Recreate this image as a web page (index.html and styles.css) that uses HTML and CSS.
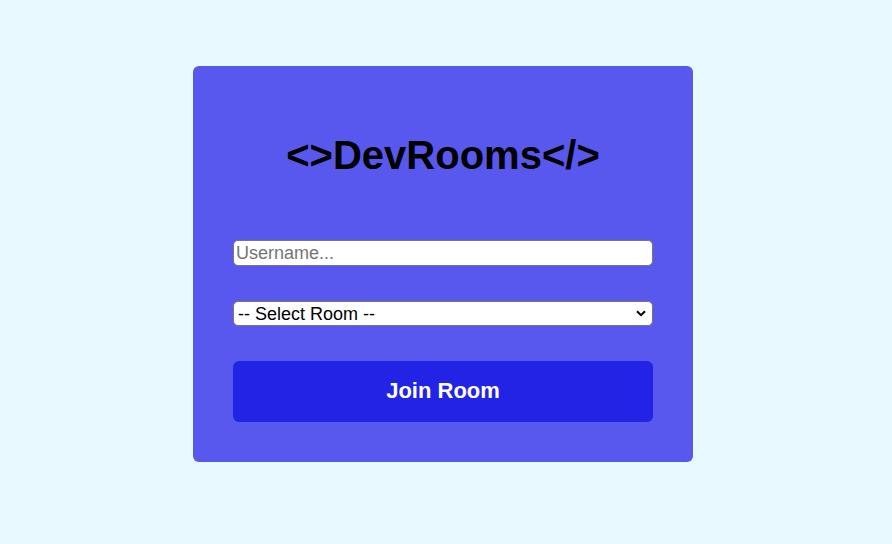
FILE: index.html
```html
<!DOCTYPE html>
<html>
<head>
<meta charset="utf-8">
<link rel="stylesheet" href="styles.css">
</head>
<body>
<div class="page">
  <div class="card">
    <h1 class="title">&lt;&gt;DevRooms&lt;/&gt;</h1>
    <form class="form">
      <input class="field" type="text" placeholder="Username...">
      <div class="select-wrap">
        <select class="field select">
          <option>-- Select Room --</option>
        </select>
        <svg class="chevron" width="10" height="7" viewBox="0 0 10 7"><path d="M1 1.2 L5 5.2 L9 1.2" fill="none" stroke="#000" stroke-width="2"/></svg>
      </div>
      <button class="join" type="button">Join Room</button>
    </form>
  </div>
</div>
</body>
</html>
```
FILE: styles.css
```css
html, body {
  margin: 0;
  padding: 0;
  background: #e8faff;
  font-family: "Liberation Sans", Arial, sans-serif;
}
.page {
  padding: 66px 0 0 193px;
  height: 544px;
  box-sizing: border-box;
}
.card {
  width: 500px;
  height: 396px;
  box-sizing: border-box;
  padding: 40px;
  background: #5858ee;
  border-radius: 6px;
}
.title {
  margin: 26px 0 0;
  font-size: 40px;
  line-height: 46px;
  font-weight: bold;
  text-align: center;
  color: #000;
}
.form {
  display: flex;
  flex-direction: column;
  margin-top: 62px;
  gap: 35px;
}
.field {
  width: 100%;
  box-sizing: border-box;
  height: 26px;
  margin: 0;
  font-family: "Liberation Sans", Arial, sans-serif;
  font-size: 18px;
  padding: 1px 2px;
  border: 1px solid #767676;
  border-radius: 5px;
  background: #fff;
  color: #000;
}
.select-wrap {
  position: relative;
  height: 25px;
}
.select {
  -webkit-appearance: none;
  appearance: none;
  height: 25px;
  padding: 0 24px 0 4px;
}
.chevron {
  position: absolute;
  right: 7px;
  top: 9px;
  pointer-events: none;
}
.join {
  height: 61px;
  border: none;
  border-radius: 6px;
  background: #2323e6;
  color: #fff;
  font-family: "Liberation Sans", Arial, sans-serif;
  font-size: 22px;
  font-weight: bold;
  padding: 0 0 2px;
  cursor: pointer;
}
```
